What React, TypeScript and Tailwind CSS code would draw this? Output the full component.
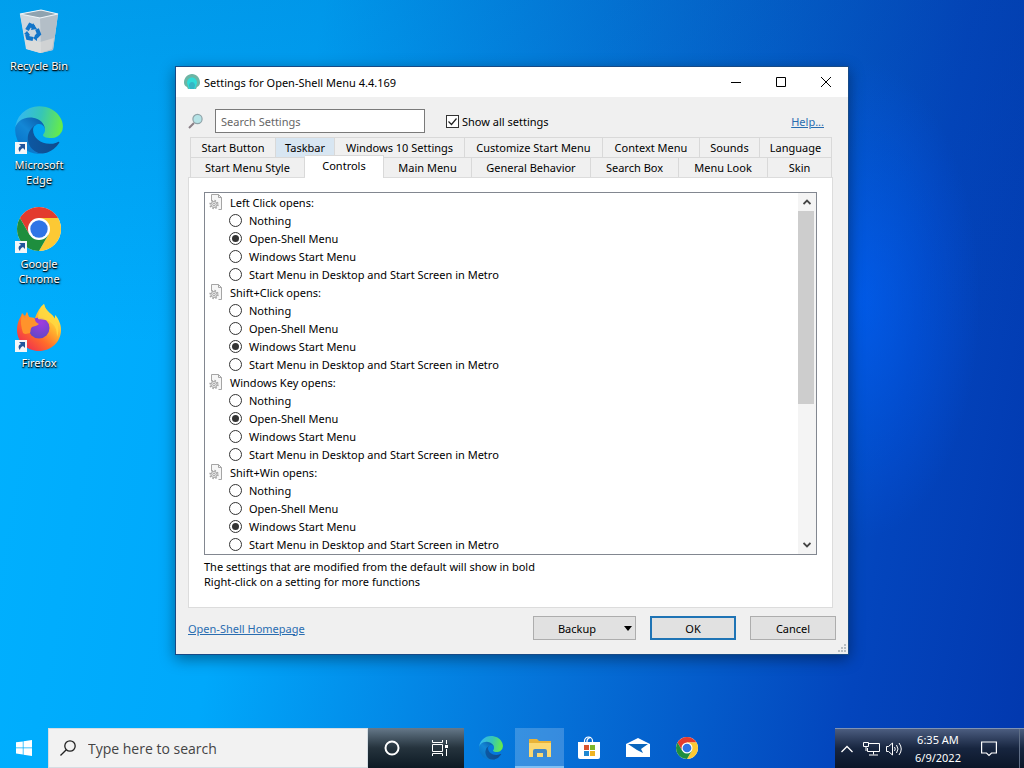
import React, { useState } from 'react';

const tabRows = [
  {
    grid: 'grid-cols-[85fr_59fr_130fr_138fr_97fr_60fr_72fr]',
    tabs: ['Start Button', 'Taskbar', 'Windows 10 Settings', 'Customize Start Menu', 'Context Menu', 'Sounds', 'Language'],
  },
  {
    grid: 'grid-cols-[114fr_79fr_88fr_119fr_88fr_89fr_64fr]',
    tabs: ['Start Menu Style', 'Controls', 'Main Menu', 'General Behavior', 'Search Box', 'Menu Look', 'Skin'],
  },
];

const options = ['Nothing', 'Open-Shell Menu', 'Windows Start Menu', 'Start Menu in Desktop and Start Screen in Metro'];

const settings = [
  { id: 'click', title: 'Left Click opens:', value: 1 },
  { id: 'shift-click', title: 'Shift+Click opens:', value: 2 },
  { id: 'win', title: 'Windows Key opens:', value: 1 },
  { id: 'shift-win', title: 'Shift+Win opens:', value: 2 },
];

const RecycleIcon = () => (
  <svg viewBox="0 0 48 48" className="size-12">
    <path d="M5 7l21-4 17 4-5 36-13 3-14-4z" fill="#d9dfe4" />
    <path d="M5 7l20 4 1 35-14-4z" fill="#cdd6dd" />
    <path d="M25 11l18-4-5 36-12 3z" fill="#b3bec7" />
    <path d="M5 7l21-4 17 4-18 4z" fill="#8fa3b0" stroke="#eef4f8" strokeWidth="1.2" />
    <path d="M10 31l15 4 14-4-2 11-11 4-14-4z" fill="#e3dfdb" opacity=".6" />
    <g fill="none" stroke="#1275c9" strokeWidth="4">
      <path d="M12 23l3-5 4 2" />
      <path d="M22 22l2 5-3 3" />
      <path d="M18 32l-5-1-1-4" />
    </g>
    <path d="M18 16l4 6-6 1zM22 27v7l-4-3zM9 27l3-3 3 4z" fill="#1275c9" />
  </svg>
);

const EdgeIcon = ({ className }) => (
  <svg viewBox="4 4 257 257" className={className}>
    <defs>
      <linearGradient id="edge-a" x1="63" y1="180" x2="241" y2="180" gradientUnits="userSpaceOnUse">
        <stop stopColor="#0c59a4" />
        <stop offset="1" stopColor="#114a8b" />
      </linearGradient>
      <linearGradient id="edge-b" x1="150" y1="100" x2="46" y2="213" gradientUnits="userSpaceOnUse">
        <stop stopColor="#0c66b4" />
        <stop offset=".5" stopColor="#1387d6" />
        <stop offset="1" stopColor="#0a78cc" />
      </linearGradient>
      <linearGradient id="edge-c" x1="20" y1="70" x2="250" y2="120" gradientUnits="userSpaceOnUse">
        <stop stopColor="#35b8ef" />
        <stop offset=".5" stopColor="#36c6b6" />
        <stop offset="1" stopColor="#66eb4a" />
      </linearGradient>
    </defs>
    <path fill="url(#edge-a)" d="M235.68 195.46a93.73 93.73 0 0 1-10.54 4.71 101.87 101.87 0 0 1-35.9 6.46c-47.32 0-88.54-32.55-88.54-74.32A31.48 31.48 0 0 1 117.13 105c-42.8 1.8-53.8 46.4-53.8 72.53 0 73.88 68.09 81.37 82.76 81.37 7.91 0 19.84-2.3 27-4.56l1.31-.44A128.34 128.34 0 0 0 241 201.1a4 4 0 0 0-5.32-5.64z" />
    <path fill="url(#edge-b)" d="M110.34 246.34A79.2 79.2 0 0 1 87.6 225a80.72 80.72 0 0 1 29.53-120c3.12-1.47 8.45-4.13 15.54-4a32.35 32.35 0 0 1 25.69 13 31.88 31.88 0 0 1 6.36 18.66c0-.21 24.46-79.6-80-79.6-43.9 0-80 41.66-80 78.21a130.15 130.15 0 0 0 12.11 56 128 128 0 0 0 156.38 67.11 75.55 75.55 0 0 1-62.78-8z" />
    <path fill="url(#edge-c)" d="M156.94 153.78c-.81 1.05-3.3 2.5-3.3 5.66 0 2.61 1.7 5.12 4.72 7.23 14.38 10 41.49 8.68 41.56 8.68a59.56 59.56 0 0 0 30.27-8.35 61.38 61.38 0 0 0 30.31-52.8c.26-22.41-8-37.31-11.34-43.91C228.88 28.76 183.19 4.92 132.64 4.92a128 128 0 0 0-128 126.2c.48-36.54 36.8-66.05 80-66.05 3.5 0 23.46.34 42 10.07 16.34 8.58 24.9 18.94 30.85 29.21 6.18 10.67 7.28 24.15 7.28 29.52s-2.82 13.39-7.83 19.91z" />
  </svg>
);

const ChromeIcon = ({ className }) => (
  <svg viewBox="0 0 48 48" className={className}>
    <circle cx="24" cy="24" r="22" fill="#fff" />
    <path d="M24 13h19.05A22 22 0 0 0 4.95 13l9.52 16.5z" fill="#e33b2e" />
    <path d="M33.53 29.5L24 46a22 22 0 0 0 19.05-33H24z" fill="#fcc934" />
    <path d="M14.47 29.5L4.95 13A22 22 0 0 0 24 46l9.53-16.5z" fill="#1e8e3e" />
    <circle cx="24" cy="24" r="11" fill="#fff" />
    <circle cx="24" cy="24" r="8.7" fill="#2f74e6" />
  </svg>
);

const FirefoxIcon = () => (
  <svg viewBox="0 0 48 48" className="size-12">
    <defs>
      <linearGradient id="fox-a" x1="40" y1="6" x2="8" y2="42" gradientUnits="userSpaceOnUse">
        <stop stopColor="#fff44f" />
        <stop offset=".35" stopColor="#ffb02e" />
        <stop offset=".65" stopColor="#ff6a2b" />
        <stop offset="1" stopColor="#f0304f" />
      </linearGradient>
      <radialGradient id="fox-b" cx=".6" cy=".25" r=".8">
        <stop stopColor="#a03be0" />
        <stop offset="1" stopColor="#5f48c4" />
      </radialGradient>
    </defs>
    <path fill="url(#fox-a)" d="M29 0c1 5 4 8 8 11 1 1 2 2 3 4v-4c4 4 6 10 6 15 0 12-10 21-22 21S2 38 2 26c0-5 1-9 4-14l1-3 3 3 2-4 2 5 6 1c2-6 5-11 9-14z" />
    <circle cx="24" cy="24" r="10.5" fill="url(#fox-b)" />
    <path fill="#ff932b" d="M7 11l3 3 2-6 2 6 6 1c0 3 2 4 4 5-2 2-5 2-7 3-2 2-1 4-2 6-2 0-4 2-7 0-2-6-3-12-1-18z" />
    <path fill="#ffd83f" d="M29 0c1 5 5 8 8 11 6 6 8 14 5 22 0-8-2-12-7-15-4-3-9-2-12-3 0-6 2-11 6-15z" opacity=".85" />
  </svg>
);

const Shortcut = () => (
  <svg viewBox="0 0 12 12" className="absolute bottom-0 left-0 size-3">
    <path d="M0 0h12v12H0z" fill="#f4f6f8" />
    <path d="M4 2h6v6L8 6c-2 1-3 2-3 4-2-2-2-5 1-6z" fill="#20549c" />
  </svg>
);

const ShellIcon = () => (
  <svg viewBox="0 0 16 16" className="size-4">
    <path d="M8 0C3.500 0 0 4 0 8.500c0 2 1 4 3 4.500l1 2h8l1-2c2-.5 3-2.500 3-4.500C16 4 12.500 0 8 0z" fill="#6db5a4" />
    <path d="M8 3.500c-3 0-5 2.500-5 5.500l2 6h6l2-6c0-3-2-5.500-5-5.500z" fill="#30dcd8" />
    <path d="M8 8c-2 0-3 2-3 3.500L6 15h4l1-3.500C11 10 10 8 8 8z" fill="#35b5c4" />
  </svg>
);

const LensIcon = () => (
  <svg viewBox="0 0 16 16" className="size-4">
    <path d="M1 15l5-5" stroke="#8a7f86" strokeWidth="2" />
    <circle cx="9.500" cy="6" r="4.600" fill="#b5e3e6" stroke="#8fa3a8" strokeWidth="1.200" />
  </svg>
);

const PageIcon = () => (
  <svg viewBox="0 0 16 16" className="size-4" fill="none" stroke="#a5a5a5">
    <path d="M3.500 7V.5h7l3 3v12h-3" fill="#f6f6f6" />
    <path d="M10.500.5v3h3" />
    <circle cx="6" cy="10.500" r="3.800" strokeWidth="1.800" strokeDasharray="1.500 1.480" />
    <circle cx="6" cy="10.500" r="3" fill="#f1f1f1" />
    <circle cx="6" cy="10.500" r="1.300" />
  </svg>
);

const desktopIcons = [
  { name: 'Recycle Bin', icon: <RecycleIcon />, shortcut: false },
  { name: 'Microsoft Edge', icon: <EdgeIcon className="size-12" />, shortcut: true },
  { name: 'Google Chrome', icon: <ChromeIcon className="size-12" />, shortcut: true },
  { name: 'Firefox', icon: <FirefoxIcon />, shortcut: true },
];

const SettingGroup = ({ setting }) => {
  const [value, setValue] = useState(setting.value);

  return (
    <fieldset>
      <legend className="flex h-[18px] items-center gap-1.5">
        <PageIcon />
        {setting.title}
      </legend>
      {options.map((option, i) => (
        <label key={option} className="flex h-[18px] items-center gap-[7px] pl-[21px]">
          <input
            type="radio"
            name={setting.id}
            checked={value === i}
            onChange={() => setValue(i)}
            className="grid size-[13px] shrink-0 appearance-none place-items-center rounded-full border border-[#333] bg-white checked:before:size-[7px] checked:before:rounded-full checked:before:bg-[#333]"
          />
          {option}
        </label>
      ))}
    </fieldset>
  );
};

const Tab = ({ label, active, onSelect }) => {
  let look = 'border-r border-t border-[#d9d9d9] bg-[#f0f0f0]';
  if (label === 'Taskbar') look = 'border-r border-t border-[#d9d9d9] bg-[#d8e6f2]';
  if (active) look = 'relative -mt-0.5 -mb-px border-t border-r border-[#d9d9d9] bg-white pb-1';
  return (
    <button role="tab" aria-selected={active} onClick={onSelect} className={`whitespace-nowrap ${look}`}>
      {label}
    </button>
  );
};

const SettingsWindow = () => {
  const [tab, setTab] = useState('Controls');
  const [showAll, setShowAll] = useState(true);

  return (
    <section className="relative mt-[66px] self-start border border-[#174a86] bg-[#f0f0f0] text-black shadow-[0_4px_14px_rgba(0,0,0,0.4)]">
      <header className="flex h-[30px] items-center bg-white pl-2">
        <ShellIcon />
        <h1 className="ml-1 grow">Settings for Open-Shell Menu 4.4.169</h1>
        <button aria-label="Minimize" className="grid h-full w-[45px] place-items-center">
          <svg viewBox="0 0 10 10" className="size-2.5" stroke="#000"><path d="M0 5.500h10" /></svg>
        </button>
        <button aria-label="Maximize" className="grid h-full w-[45px] place-items-center">
          <svg viewBox="0 0 10 10" className="size-2.5" stroke="#000" fill="none"><path d="M.5.5h9v9h-9z" /></svg>
        </button>
        <button aria-label="Close" className="grid h-full w-[45px] place-items-center">
          <svg viewBox="0 0 10 10" className="size-2.5" stroke="#000"><path d="M0 0l10 10M10 0L0 10" /></svg>
        </button>
      </header>

      <div className="px-3 pt-3 pb-3.5">
        <div className="flex h-6 items-center pr-3">
          <LensIcon />
          <input
            type="text"
            aria-label="Search Settings"
            placeholder="Search Settings"
            className="ml-[11px] h-full w-[210px] border border-[#7a7a7a] bg-white px-[5px] placeholder:text-[#666]"
          />
          <label className="ml-[21px] flex items-center gap-[3px]">
            <span className="grid size-[13px]">
              <input
                type="checkbox"
                checked={showAll}
                onChange={() => setShowAll(!showAll)}
                className="col-start-1 row-start-1 size-[13px] appearance-none border border-[#333] bg-white"
              />
              {showAll && (
                <svg viewBox="0 0 13 13" className="pointer-events-none col-start-1 row-start-1 size-[13px]" fill="none" stroke="#222" strokeWidth="1.200">
                  <path d="M2.500 6.500l3 3 5-6" />
                </svg>
              )}
            </span>
            Show all settings
          </label>
          <a href="#help" className="ml-auto text-[#2a6db0] underline">Help...</a>
        </div>

        <div role="tablist" className="mt-1 mr-1 ml-0.5">
          {tabRows.map((row) => (
            <div key={row.grid} className={`grid h-5 border-l border-[#d9d9d9] ${row.grid}`}>
              {row.tabs.map((label) => (
                <Tab key={label} label={label} active={label === tab} onSelect={() => setTab(label)} />
              ))}
            </div>
          ))}
        </div>

        <div className="mr-[3px] border border-[#dcdcdc] bg-white px-[15px] pt-3.5 pb-[18px]">
          <div className="flex h-[363px] border border-[#828790]">
            <div className="grow overflow-hidden pl-[3px]">
              {settings.map((s) => (
                <SettingGroup key={s.id} setting={s} />
              ))}
            </div>
            <div className="flex w-[18px] flex-col bg-[#f4f4f4]">
              <button aria-label="Scroll up" className="grid h-[18px] place-items-center">
                <svg viewBox="0 0 8 8" className="size-2" fill="none" stroke="#444" strokeWidth="1.800"><path d="M.5 6L4 2.500 7.500 6" /></svg>
              </button>
              <div className="mr-0.5 h-[193px] bg-[#cdcdcd]" />
              <button aria-label="Scroll down" className="mt-auto grid h-[18px] place-items-center">
                <svg viewBox="0 0 8 8" className="size-2" fill="none" stroke="#444" strokeWidth="1.800"><path d="M.5 2L4 5.500 7.500 2" /></svg>
              </button>
            </div>
          </div>
          <p className="mt-1">The settings that are modified from the default will show in bold</p>
          <p>Right-click on a setting for more functions</p>
        </div>

        <footer className="mt-2 flex items-center gap-3.5">
          <a href="#home" className="mr-auto text-[#2a6db0] underline">Open-Shell Homepage</a>
          <button className="flex h-6 w-[103px] items-center border border-[#adadad] bg-[#e1e1e1] pr-[3px]">
            <span className="grow pr-1">Backup</span>
            <svg viewBox="0 0 8 5" className="h-[5px] w-2"><path d="M0 0h8L4 5z" /></svg>
          </button>
          <button className="h-6 w-[86px] border-2 border-[#1f74b5] bg-[#e1e1e1]">OK</button>
          <button className="h-6 w-[86px] border border-[#adadad] bg-[#e1e1e1]">Cancel</button>
        </footer>
      </div>

      <svg viewBox="0 0 8 8" className="absolute right-0.5 bottom-0.5 size-2" fill="#b9bfc2">
        <path d="M6 0h2v2H6zM3 3h2v2H3zM6 3h2v2H6zM0 6h2v2H0zM3 6h2v2H3zM6 6h2v2H6z" />
      </svg>
    </section>
  );
};

const Taskbar = () => (
  <nav className="flex h-10 items-stretch text-white">
    <button aria-label="Start" className="grid w-12 place-items-center">
      <svg viewBox="0 0 16 16" className="size-4" fill="#fff">
        <path d="M0 2.300L6.800 1.400v6.200H0zM7.500 1.300L16 0v7.600H7.500zM0 8.300h6.800v6.200L0 13.600zM7.500 8.300H16V16l-8.500-1.300z" />
      </svg>
    </button>
    <label className="flex w-80 items-center gap-3 border border-[#d5dde3] bg-[#f2f2f2] pl-[11px] text-[#444]">
      <svg viewBox="0 0 16 16" className="size-4 shrink-0" fill="none" stroke="#222" strokeWidth="1.300">
        <circle cx="10" cy="6" r="5.200" />
        <path d="M6.300 9.700L.5 15.500" />
      </svg>
      <input
        type="text"
        aria-label="Search"
        placeholder="Type here to search"
        className="h-full w-full font-['Open_Sans',sans-serif] text-[14px] placeholder:text-[#444]"
      />
    </label>
    <div className="flex w-24 bg-linear-to-b from-[#66798a] via-[#25333d] via-50% to-[#0d1a24]">
      <button aria-label="Cortana" className="grid w-12 place-items-center">
        <svg viewBox="0 0 16 16" className="size-4" fill="none" stroke="#fff" strokeWidth="2"><circle cx="8" cy="8" r="6.500" /></svg>
      </button>
      <button aria-label="Task View" className="grid w-12 place-items-center">
        <svg viewBox="0 0 17 16" className="h-4 w-[17px]" fill="none" stroke="#fff">
          <path d="M.5 0v2.500h10V0M.5 16v-2.500h10V16M.5 4.500h10v7H.5zM14.500 0v4M14.500 9v7" />
          <path d="M13 5h3v3h-3z" fill="#fff" stroke="none" />
        </svg>
      </button>
    </div>
    <div className="ml-0.5 grid grid-cols-[repeat(5,49px)]">
      <button aria-label="Microsoft Edge" className="grid place-items-center"><EdgeIcon className="size-6" /></button>
      <button aria-label="File Explorer" className="grid place-items-center border-b-2 border-[#7fc0f5] bg-white/20">
        <svg viewBox="0 0 24 20" className="mt-0.5 h-5 w-6">
          <path d="M1 1h8l2 2h12v16H1z" fill="#e9b338" />
          <path d="M1 5h22v14H1z" fill="#fbd872" />
          <path d="M5 19v-6q0-2 2-2h10q2 0 2 2v6h-4v-4H9v4z" fill="#4087c6" />
        </svg>
      </button>
      <button aria-label="Microsoft Store" className="grid place-items-center">
        <svg viewBox="0 0 24 24" className="size-6">
          <path d="M7.500 7V5a4 4 0 0 1 8 0v2M10 6V4.500a4 4 0 0 1 4-3" fill="none" stroke="#fff" strokeWidth="1.200" />
          <path d="M1 6h22v15q0 2-2 2H3q-2 0-2-2z" fill="#fff" />
          <path d="M7 9h5v5H7z" fill="#d8522c" />
          <path d="M13 9h5v5h-5z" fill="#7db52a" />
          <path d="M7 15h5v5H7z" fill="#1e88d2" />
          <path d="M13 15h5v5h-5z" fill="#efb321" />
        </svg>
      </button>
      <button aria-label="Mail" className="grid place-items-center">
        <svg viewBox="0 0 24 20" className="h-5 w-6">
          <path d="M0 6l12-6 12 6v13H0z" fill="#fff" />
          <path d="M2 6h20l-7 5 2 4-6-3z" fill="#0a66bd" />
        </svg>
      </button>
      <button aria-label="Google Chrome" className="grid place-items-center"><ChromeIcon className="size-6" /></button>
    </div>
    <div className="ml-auto flex w-[189px] items-center border-t border-[#7f93b4] bg-linear-to-b from-[#4c5d80] via-[#17253f] via-50% to-[#0b1628] pl-[6px]">
      <button aria-label="Show hidden icons">
        <svg viewBox="0 0 12 12" className="size-3" fill="none" stroke="#fff" strokeWidth="1.300"><path d="M.5 9L6 3.500 11.500 9" /></svg>
      </button>
      <svg viewBox="0 0 17 14" className="ml-2.5 h-3.5 w-[17px]" fill="none" stroke="#fff">
        <path d="M6 1.500h10.500v8H4.500V6M10.500 9.500v3M6 13h9M.5.5h5v4h-5zM3 4.500V9" />
      </svg>
      <svg viewBox="0 0 17 14" className="ml-1.5 h-3.5 w-[17px]" fill="none" stroke="#fff">
        <path d="M.5 4.500h2L6.500 1v12l-4-3.500h-2zM8.500 5q1.500 2 0 4M10.500 3q3 4 0 8M13 1q4.500 6 0 12" />
      </svg>
      <time className="ml-3 text-center leading-[18px]">
        6:35 AM
        <br />
        6/9/2022
      </time>
      <button aria-label="Notifications" className="ml-5">
        <svg viewBox="0 0 16 16" className="size-4" fill="none" stroke="#fff" strokeWidth="1.200"><path d="M.6 1h14.800v11H10.500L8 14.500 5.500 12H.6z" /></svg>
      </button>
      <div className="mr-1 ml-auto h-full w-px bg-[#5f6e86]" />
    </div>
  </nav>
);

export default function App() {
  return (
    <div className="flex min-h-screen flex-col bg-[radial-gradient(ellipse_120px_240px_at_860px_300px,rgba(0,98,255,0.6),transparent),linear-gradient(to_bottom,rgba(0,60,140,0.16),transparent_45%),linear-gradient(100deg,#00b2ff_0%,#00a8fb_28%,#0572d8_58%,#0345bd_84%,#0238ae_100%)] font-['Noto_Sans','Open_Sans',sans-serif] text-[11px] leading-[15px]">
      <main className="grid grow grid-cols-[1fr_minmax(0,674px)_1fr]">
        <ul className="w-[78px] pt-[7px]">
          {desktopIcons.map((item) => (
            <li key={item.name} className="flex h-[99px] flex-col items-center px-1 text-center text-white [text-shadow:1px_1px_2px_#000,0_1px_1px_#000]">
              <div className="relative">
                {item.icon}
                {item.shortcut && <Shortcut />}
              </div>
              <span className="mt-[3px]">{item.name}</span>
            </li>
          ))}
        </ul>
        <SettingsWindow />
      </main>
      <Taskbar />
    </div>
  );
}
